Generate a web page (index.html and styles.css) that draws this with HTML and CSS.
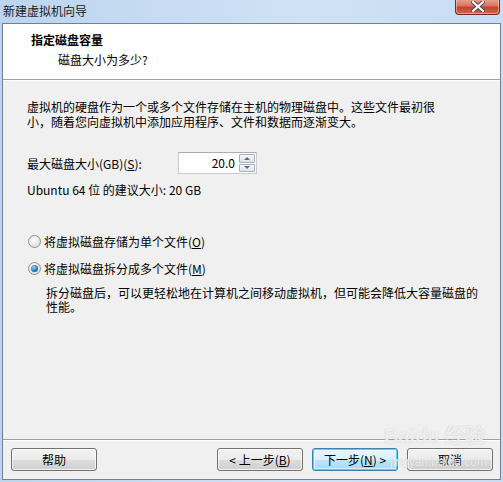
FILE: index.html
```html
<!DOCTYPE html>
<html lang="zh-CN">
<head>
<meta charset="UTF-8">
<title>新建虚拟机向导</title>
<link rel="stylesheet" href="styles.css">
</head>
<body>

<div class="window">
    <div class="titlebar">
        <span class="title">新建虚拟机向导</span>
        <div class="close-btn">
            <svg width="14" height="11" viewBox="0 0 14 11">
                <path d="M2 1 L12 10 M12 1 L2 10" stroke="#4a4a4a" stroke-width="4.2" stroke-linecap="square"/>
                <path d="M2 1 L12 10 M12 1 L2 10" stroke="#fff" stroke-width="2.2" stroke-linecap="square"/>
            </svg>
        </div>
    </div>

    <div class="client">
        <div class="header">
            <div class="header-title">指定磁盘容量</div>
            <div class="header-sub">磁盘大小为多少?</div>
        </div>

        <div class="content">
            <p class="intro">虚拟机的硬盘作为一个或多个文件存储在主机的物理磁盘中。这些文件最初很小，随着您向虚拟机中添加应用程序、文件和数据而逐渐变大。</p>

            <div class="size-row">
                <span class="size-label">最大磁盘大小(GB)(<u>S</u>):</span>
                <div class="spin">
                    <div class="spin-value">20.0</div>
                    <div class="spin-btns">
                        <div class="spin-btn"><span class="arrow-up"></span></div>
                        <div class="spin-btn"><span class="arrow-down"></span></div>
                    </div>
                </div>
            </div>
            <div class="hint">Ubuntu 64 位 的建议大小: 20 GB</div>

            <div class="options">
                <label class="radio-row">
                    <span class="radio"></span>
                    <span>将虚拟磁盘存储为单个文件(<u>O</u>)</span>
                </label>
                <label class="radio-row">
                    <span class="radio checked"></span>
                    <span>将虚拟磁盘拆分成多个文件(<u>M</u>)</span>
                </label>
                <p class="option-desc">拆分磁盘后，可以更轻松地在计算机之间移动虚拟机，但可能会降低大容量磁盘的性能。</p>
            </div>
        </div>

        <div class="footer">
            <div class="btn">帮助</div>
            <div class="spacer"></div>
            <div class="btn">&lt; 上一步(<u>B</u>)</div>
            <div class="btn default">下一步(<u>N</u>) &gt;</div>
            <div class="btn">取消</div>
        </div>
    </div>

    <div class="watermark">
        <div class="wm-logo">Bai<span class="wm-paw">du</span> 经验</div>
        <div class="wm-url">jingyan.baidu.com</div>
    </div>
</div>

</body>
</html>
```

FILE: styles.css
```css
/* Win7 wizard dialog */
body {
    margin: 0;
    padding: 0;
    font-family: "Noto Sans CJK SC", "Noto Sans", sans-serif;
    font-size: 12px;
    color: #000;
}

.window {
    position: relative;
    width: 503px;
    height: 482px;
    box-sizing: border-box;
    padding: 0 2px 2px 2px;
    background: linear-gradient(to right, #bcd4ee, #cfe2f5 60%, #c8ddf3);
    display: flex;
    flex-direction: column;
    overflow: hidden;
}

.titlebar {
    height: 23px;
    display: flex;
    align-items: center;
    position: relative;
}

.title {
    padding-left: 1px;
    margin-top: -2px;
    color: #1a1a1a;
}

.close-btn {
    position: absolute;
    top: -1px;
    right: 1px;
    width: 45px;
    height: 16px;
    box-sizing: border-box;
    border: 1px solid #6e2b22;
    border-top: none;
    border-radius: 0 0 4px 4px;
    background: linear-gradient(to bottom, #e8a593 0%, #d9765f 45%, #c1442e 55%, #d0664a 100%);
    box-shadow: inset 0 0 0 1px rgba(255, 220, 210, 0.5);
    display: flex;
    align-items: center;
    justify-content: center;
}

.client {
    flex: 1;
    display: flex;
    flex-direction: column;
    background-color: #f0f0f0;
    border: 1px solid #6f8197;
}

.header {
    height: 56px;
    background-color: #fff;
    border-bottom: 1px solid #a0a0a0;
    box-shadow: 0 1px 0 #fff;
    padding: 7px 0 0 28px;
    box-sizing: border-box;
}

.header-title {
    font-weight: bold;
    line-height: 17px;
}

.header-sub {
    padding-left: 27px;
    line-height: 17px;
    margin-top: 3px;
}

.content {
    flex: 1;
    padding: 19px 24px 0 24px;
}

.intro {
    margin: 0;
    width: 422px;
    line-height: 15px;
}

.size-row {
    display: flex;
    align-items: center;
    margin-top: 23px;
}

.size-label {
    width: 151px;
}

.spin {
    display: flex;
    height: 22px;
    width: 79px;
    box-sizing: border-box;
    border: 1px solid #c8ccd2;
    border-top-color: #abadb3;
    background-color: #fff;
}

.spin-value {
    flex: 1;
    text-align: right;
    padding-right: 3px;
    line-height: 20px;
}

.spin-btns {
    width: 16px;
    display: flex;
    flex-direction: column;
    padding: 1px;
    gap: 1px;
}

.spin-btn {
    flex: 1;
    border: 1px solid #a8b0bc;
    border-radius: 1px;
    background: linear-gradient(to bottom, #f6f7f9, #dfe3ea);
    display: flex;
    align-items: center;
    justify-content: center;
}

.arrow-up {
    border-left: 3px solid transparent;
    border-right: 3px solid transparent;
    border-bottom: 3px solid #5d6b8c;
}

.arrow-down {
    border-left: 3px solid transparent;
    border-right: 3px solid transparent;
    border-top: 3px solid #5d6b8c;
}

.hint {
    margin-top: 8px;
    line-height: 16px;
}

.options {
    margin-top: 35px;
}

.radio-row {
    display: flex;
    align-items: center;
    gap: 3px;
    height: 16px;
    margin-bottom: 11px;
    margin-left: 1px;
}

.radio {
    width: 11px;
    height: 11px;
    border-radius: 50%;
    border: 1px solid #8e8f8f;
    background: radial-gradient(circle at 40% 35%, #ffffff, #e0e0e0 70%, #d0d0d0);
    position: relative;
}

.radio.checked::after {
    content: "";
    position: absolute;
    top: 2px;
    left: 2px;
    width: 7px;
    height: 7px;
    border-radius: 50%;
    background: radial-gradient(circle at 40% 35%, #9fd3f5, #1c71b8 60%, #0d4a8a);
}

.option-desc {
    margin: -1px 0 0 19px;
    width: 436px;
    line-height: 14px;
}

.footer {
    height: 40px;
    box-sizing: border-box;
    border-top: 1px solid #a0a0a0;
    box-shadow: inset 0 1px 0 #fff;
    display: flex;
    align-items: flex-start;
    padding: 8px 7px 0 8px;
    gap: 9px;
}

.spacer {
    flex: 1;
}

.btn {
    width: 86px;
    height: 23px;
    box-sizing: border-box;
    border: 1px solid #707070;
    border-radius: 3px;
    background: linear-gradient(to bottom, #f2f2f2 0%, #ebebeb 50%, #dddddd 51%, #cfcfcf 100%);
    box-shadow: inset 0 0 0 1px rgba(255, 255, 255, 0.7);
    text-align: center;
    line-height: 21px;
}

.btn.default {
    border-color: #3c7fb1;
    box-shadow: inset 0 0 0 1px #48d8fb, inset 0 0 0 2px rgba(255, 255, 255, 0.5);
    background: linear-gradient(to bottom, #eaf6fd 0%, #d9f0fc 50%, #bee6fd 51%, #a7d9f5 100%);
}

.watermark {
    position: absolute;
    top: 424px;
    left: 384px;
    color: rgba(255, 255, 255, 0.75);
    text-shadow: 0 0 1px rgba(150, 150, 150, 0.6);
    pointer-events: none;
}

.wm-logo {
    font-family: "Liberation Sans", sans-serif;
    font-size: 20px;
    font-weight: bold;
    line-height: 24px;
}

.wm-url {
    font-family: "Liberation Sans", sans-serif;
    font-size: 12px;
    line-height: 12px;
    margin-top: 8px;
    margin-left: 6px;
}
```
